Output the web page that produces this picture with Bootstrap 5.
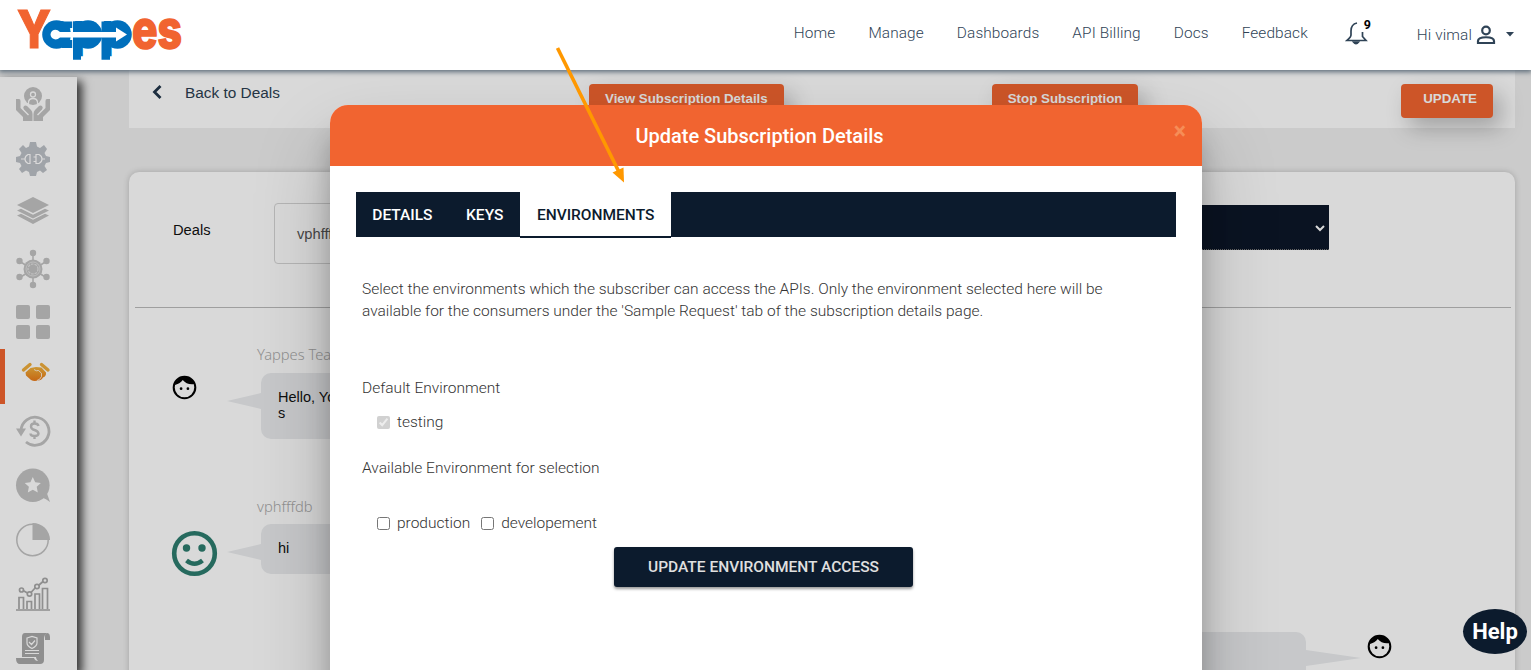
<!DOCTYPE html>
<html lang="en">
<head>
<meta charset="utf-8">
<title>Yappes - Update Subscription Details</title>
<link rel="stylesheet" href="https://cdn.jsdelivr.net/npm/bootstrap@5.3.0/dist/css/bootstrap.min.css">
<style>
:root{--navy:#0c1b2d;--orange:#f16430}
body{height:670px;overflow:hidden;background:#efefef;font-family:Roboto,"Liberation Sans",sans-serif;font-weight:300;color:#3c4858}
.topbar{height:70px;z-index:1080;background:#fff;box-shadow:0 1px 5px 1px #5b6b78;padding:0 17px 0 16px}
.topbar .nav-link{font-size:15.4px;color:#2f4356;padding:0;line-height:20px;letter-spacing:.11px;font-weight:300}
.topnav{gap:33px;margin-top:-4px}
.app-shell{height:600px;overflow:hidden}
.side{width:77px;margin-top:7px;background:#fff;box-shadow:4px 5px 9px 1px rgba(0,0,0,.75);flex:none;color:#bdbdbd}
.side a{height:54.5px;flex:none;color:#c2c2c2;padding-left:16px}
.side a.active{border-left:5px solid var(--orange);padding-left:11px}
.side svg{overflow:visible}
.workspace{padding:0 16px 0 52px}
.toolbar{height:58px;background:#fff;font-family:"Liberation Sans",sans-serif;padding-top:14px}
.act-btn{background:var(--orange);color:#fff;font:bold 13.33px/20px "Liberation Sans",sans-serif;height:34px;border-radius:4px;box-shadow:8px 10px 22px rgba(0,0,0,.25);padding:0 16px 5px;border:0}
.back{font-size:15.4px;line-height:20px;color:#2c3e50;width:460px;padding-left:23px}
.deal-card{margin-top:44px;height:520px;border:0;border-radius:10px;box-shadow:0 0 6px rgba(0,0,0,.2);font-family:"Liberation Sans",sans-serif;color:#111;font-weight:400}
.filters{height:136px;margin:0 4px 0 6px;border-bottom:1px solid #bbb;padding:31px 182px 0 38px;font-size:14.7px}
.deal-input{width:300px;height:61px;border:1px solid #d5d5d5;border-radius:4px;padding:19px 22px;color:#555}
.deal-select{width:300px;height:45px;margin-top:2px;background:#0c1729;color:#fff;border-bottom:1px dotted #777}
.who{font:300 14.7px/20px "Noto Sans",sans-serif;color:#aaa}
.bubble{position:relative;background:#eaecee;border-radius:10px;width:400px;padding:16px 17px;font-size:14.5px;line-height:16px}
.bubble:before{content:"";position:absolute;right:100%;top:20px;border:8px solid transparent;border-left:0;border-right:34px solid #eaecee}
.bubble.mine:before{right:auto;left:100%;top:18px;border-right:0;border-left:55px solid #eaecee}
.scrim{inset:0;background:rgba(0,0,0,.15);z-index:1040}
.dialog-box{left:330px;top:105px;width:872px;height:720px;background:#fff;border-radius:18px;z-index:1050;box-shadow:0 27px 24px 0 rgba(0,0,0,.2),0 40px 77px 0 rgba(0,0,0,.22)}
.dialog-head{height:61px;background:var(--orange);border-radius:18px 18px 0 0;color:#fff;font-size:20px;font-weight:500}
.close-x{right:16px;top:17px;font:bold 23px/20px Roboto,sans-serif;color:#f68d57}
.env-tabs{background:var(--navy);height:45px;margin:26px 26px 0 25.5px;font-size:15.5px;font-weight:500}
.env-tabs .nav-link{color:#fff;height:45px;line-height:47px;padding:0 16.8px}
.env-tabs .nav-link.active{background:#fff;color:var(--navy);height:46px;border-bottom:2px solid var(--navy)}
.dialog-body{padding:41px 32px 0;font-size:15.5px;line-height:22px;color:#333}
.env-check{line-height:22px;padding-left:15px}
.env-check input{width:13px;height:13px;margin:0 7px 0 0}
.access-btn{width:299px;height:40px;margin:13px auto 0 252px;background:var(--navy);color:#e0e0e0;border:0;border-radius:3px;font-size:15.5px;font-weight:500;box-shadow:0 2px 3px rgba(0,0,0,.4)}
.help{left:1463px;top:609px;width:64px;height:45px;border-radius:50%;background:var(--navy);color:#fff;font:bold 22px/45px Roboto,sans-serif;z-index:1090}
.pointer{left:540px;top:30px;z-index:1100}
</style>
</head>
<body class="position-relative">
<header class="topbar position-relative d-flex align-items-center">
  <svg width="170" height="68" class="me-auto overflow-visible" viewBox="16 1 170 68" style="font-family:Inter,sans-serif;font-weight:800" role="img" aria-label="Yappes">
    <g font-size="52.5">
      <text x="17" y="48.3" fill="#f16430" stroke="#f16430" stroke-width="1.2" textLength="34" lengthAdjust="spacingAndGlyphs">Y</text>
      <text x="132" y="48" fill="#f16430" stroke="#f16430" stroke-width="1.6" textLength="50" lengthAdjust="spacingAndGlyphs">es</text>
      <text x="46" y="47" font-size="47" fill="#006fbc" textLength="84" lengthAdjust="spacingAndGlyphs">app</text>
    </g>
    <g fill="#006fbc">
      <circle cx="56.500" cy="34.500" r="14.300"/>
      <path d="M62 21.500H81V28H62ZM62 40H81V48H62Z"/>
      <circle cx="88" cy="34.500" r="14.300"/>
      <circle cx="117.500" cy="34.500" r="14.300"/>
      <path d="M73 21.500H81V59.700H73ZM101.500 21.500H110V59.700H101.500Z"/>
    </g>
    <path d="M60 32H116V27.500L127 34.500 116 41.500V37.500H60Q56 41 52 38 49 34.500 52 31 56 28 60 32Z" fill="#fff"/>
    <path d="M72.500 20V49" stroke="#fff" stroke-width=".8"/>
  </svg>
  <nav class="topnav nav">
    <a class="nav-link">Home</a><a class="nav-link">Manage</a><a class="nav-link">Dashboards</a><a class="nav-link">API Billing</a><a class="nav-link">Docs</a><a class="nav-link">Feedback</a>
  </nav>
  <div class="position-relative" style="margin:-5px 0 0 37px;width:25px;height:26px">
    <svg class="d-block" width="23" height="25" viewBox="0 0 23 25" fill="none" stroke="#2f4356" stroke-width="1.7"><path d="M12 3C7 4 6 7 6 11V15Q6 17 2 20.500H21L17.500 16.500V12"/><path d="M8.500 22Q11 25.500 13.500 22Z" fill="#2f4356"/></svg>
    <span class="position-absolute text-black" style="left:19px;top:-3px;font-size:12.500px;font-weight:700;line-height:16px">9</span>
  </div>
  <a class="nav-link d-flex align-items-center" style="margin:-1px 0 0 47px">Hi vimal
    <svg width="20" height="20" style="margin-left:4px" viewBox="0 0 20 20" fill="none" stroke="#2f4356" stroke-width="2.200"><circle cx="10" cy="5.500" r="3.800"/><path d="M2 18V16C2 11 18 11 18 16V18Z"/></svg>
    <svg width="8" height="5" style="margin-left:10px" viewBox="0 0 8 5"><path d="M0 0H8L4 4.500Z" fill="#2f4356"/></svg>
  </a>
</header>

<div class="app-shell d-flex">
  <aside class="side d-flex flex-column">
    <a class="d-flex align-items-center"><svg width="34" height="34" viewBox="0 0 34 34" fill="currentColor"><circle cx="17" cy="9" r="9"/><g fill="none" stroke="#fff" stroke-width="1.300"><circle cx="17" cy="7.500" r="2.500"/><path d="M12.500 17V15Q13 11.500 17 11.500T21.500 15V17"/></g><path d="M0 12H3Q4.500 12 4.500 14V21L8 24.500 12 28.500 13 27.500 8 22.500Q6.500 20.500 8 19 9.500 18 11 19L15 23Q16.500 24.500 16.500 27V34H7V30L0 23ZM34 12H31Q29.500 12 29.500 14V21L26 24.500 22 28.500 21 27.500 26 22.500Q27.500 20.500 26 19 24.500 18 23 19L19 23Q17.500 24.500 17.500 27V34H27V30L34 23Z"/></svg></a>
    <a class="d-flex align-items-center"><svg width="34" height="34" viewBox="0 0 34 34" fill="#bdc1c7"><path d="M14 0H20L21 4.500 24 6 28 3 31 7 28.500 11 30 14 34 15V20L30 21 28.500 24 31 28 27 31 24 28.500 21 30 20 34H14L13 30 10 28.500 6 31 3 27 5.500 24 4 21 0 20V15L4 14 5.500 11 3 7 7 3 10 6 13 4.500Z"/><g fill="none" stroke="#fff" stroke-width="1.200"><path d="M5 17H9M14 12.500H12Q9 14 9 17T12 21.500H14ZM17.500 15H20M17.500 19.500H20M20 12.500H23Q26 14 26 17T23 21.500H20ZM26 17H29"/></g></svg></a>
    <a class="d-flex align-items-center"><svg width="34" height="34" viewBox="0 2.500 34 34" fill="currentColor"><path d="M17 3.500 33 11.500 17 19.500 1 11.500Z"/><path d="M1 17 5 15.200 17 21.200 29 15.200 33 17 17 25ZM1 22 5 20.200 17 26.200 29 20.200 33 22 17 30.500Z"/></svg></a>
    <a class="d-flex align-items-center"><svg width="34" height="38" viewBox="0 -2 34 38" fill="currentColor"><g stroke="currentColor" stroke-width="1.500"><path d="M17 2V36M3 10 31 27M31 10 3 27"/></g><circle cx="17" cy="2" r="3.200"/><circle cx="17" cy="34" r="3.200"/><circle cx="3.500" cy="10" r="3.200"/><circle cx="30.500" cy="10" r="3.200"/><circle cx="3.500" cy="26" r="3.200"/><circle cx="30.500" cy="26" r="3.200"/><circle cx="17" cy="18" r="9.500"/><circle cx="17" cy="18" r="5" fill="none" stroke="#e4e4e4" stroke-width="1.200" stroke-dasharray="2.500 1"/><circle cx="17" cy="18" r="7" fill="none" stroke="#e4e4e4" stroke-width=".8"/></svg></a>
    <a class="d-flex align-items-center"><svg width="34" height="34" viewBox="0 0 34 34" fill="currentColor"><rect width="14" height="14" rx="2"/><rect x="20" width="14" height="14" rx="2"/><rect y="20" width="14" height="14" rx="2"/><rect x="20" y="20" width="14" height="14" rx="2"/></svg></a>
    <a class="active d-flex align-items-center" style="margin-top:-1px;height:55.500px"><svg width="34" height="34" viewBox="0 0 34 34"><defs><linearGradient id="hs" x2="0" y2="1"><stop stop-color="#f0b23d"/><stop offset="1" stop-color="#e87a18"/></linearGradient></defs><path d="M7.500 11 14 5.500M32 11 25.500 5.500" stroke="#efad3d" stroke-width="3.400" stroke-linecap="round"/><path d="M9.500 13.500 14.500 9 20 8 25.500 8.500 30 13.500Q30.500 17 27 18.500 25.500 21.500 22 21.500 18 22.500 15 21L10 16.500Z" fill="url(#hs)"/><path d="M18 10.500Q20.500 12.500 22.500 11.500 27 14 25.500 17.500 24 21 21 21.500" fill="none" stroke="#fff" stroke-width=".8"/></svg></a>
    <a class="d-flex align-items-center"><svg width="34" height="34" viewBox="0 3.500 34 34" fill="none" stroke="currentColor"><path d="M5 20A14 14 0 1 1 10 31.500" stroke-width="2.800"/><path d="M0 18H10L5 26Z" fill="currentColor" stroke="none"/><path d="M22.500 15.500Q22 13 18.500 13T15 16Q15 18.500 18.500 19.500T22.500 23Q22.500 25.500 18.500 25.500T14.500 23M18.500 10V13M18.500 25.500V28.500" stroke-width="2.400"/></svg></a>
    <a class="d-flex align-items-center"><svg width="34" height="34" viewBox="0 .500 34 34" fill="currentColor"><circle cx="16.800" cy="16.800" r="16.800"/><path d="M26 29Q30 30 34 33.500L31 25Z"/><path fill="#fff" d="m16.800 8.500 2.400 5.200 5.700.7-4.200 3.900 1.100 5.700-5-2.800-5 2.800 1.100-5.700-4.200-3.900 5.700-.7Z"/></svg></a>
    <a class="d-flex align-items-center"><svg width="34" height="34" viewBox="0 0 34 34"><circle cx="16.500" cy="17" r="15.700" fill="none" stroke="currentColor" stroke-width="1.500"/><path d="M16.500 17V0A17 17 0 0 1 34 17Z" fill="currentColor"/></svg></a>
    <a class="d-flex align-items-center" style="color:#a8a8a8"><svg width="34" height="34" viewBox="0 1 34 34" fill="none" stroke="currentColor" stroke-width="1.700"><path d="M0 33H34M3 32V20.500H7.500V32M11 32V24.500H15.500V32M19 32V17H23.500V32M26.500 32V11.500H31.500V32M7 13.500 11.500 16M15 15.500 19.500 10.500M22.500 8.500 27 4.500"/><circle cx="5.500" cy="13" r="2"/><circle cx="13.500" cy="17" r="2.200"/><circle cx="21" cy="9.500" r="2.200"/><circle cx="29" cy="3.500" r="2.200"/></svg></a>
    <a class="d-flex align-items-center" style="color:#a8a8a8"><svg width="34" height="32" viewBox="0 0 34 32" fill="currentColor"><path d="M9 0H31Q28 2 28 6V27Q28 31 24 31H4Q0 31 0 25H18Q19 28 22 28 20 26 20 24H6V4Q6 0 9 0Z"/><path d="M29 7V3Q29 0 32 0 34 1 34 4V7Z"/><path d="M11 5 16 3.500 21 5V10Q21 13 16 15.500 11 13 11 10ZM13 9 15.500 11.500 19 7.500M9 17.500H23M9 20.500H23" fill="none" stroke="#fff" stroke-width="1.200"/></svg></a>
  </aside>

  <main class="workspace flex-grow-1">
    <div class="toolbar d-flex align-items-start">
      <a class="back d-flex align-items-center text-decoration-none"><svg width="10" height="14" viewBox="0 0 10 14" fill="none" stroke="#22364a" stroke-width="2.800" style="margin-top:-3px"><path d="M8.500 1 2.500 7 8.500 13"/></svg><span style="margin-left:23px;margin-top:-1px">Back to Deals</span></a>
      <button class="act-btn">View Subscription Details</button>
      <button class="act-btn" style="margin-left:208px">Stop Subscription</button>
      <button class="act-btn ms-auto" style="margin-right:22px;padding:0 16px 5px 22px">UPDATE</button>
    </div>
    <section class="deal-card card">
      <div class="filters d-flex align-items-start">
        <span style="width:101px;padding-top:16px">Deals</span>
        <div class="deal-input">vphfffdb</div>
        <div class="deal-select ms-auto d-flex align-items-center justify-content-end pe-1"><svg width="10" height="7" viewBox="0 0 10 7" fill="none" stroke="#fff" stroke-width="2" style="margin-top:2px"><path d="M1 1 5 5 9 1"/></svg></div>
      </div>
      <div class="d-flex" style="padding:36px 0 0 43px">
        <svg width="25" height="25" viewBox="1 1 22 22" class="flex-shrink-0" style="margin:31px 63px 0 0"><circle cx="12" cy="12" r="9.500" fill="none" stroke="#000" stroke-width="1.800"/><path d="M3 10Q8 9 10.500 5.500 14 10 21 9 18 2.500 12 2.500T3 10Z"/><circle cx="9" cy="13" r="1.200"/><circle cx="15" cy="13" r="1.200"/></svg>
        <div style="margin-left:-3px"><div class="who" style="margin-bottom:9px">Yappes Team</div><div class="bubble" style="height:66px;margin-left:4px;white-space:nowrap">Hello, You<br>s</div></div>
      </div>
      <div class="d-flex" style="padding:57px 0 0 42px">
        <svg width="47" height="47" viewBox="0 0 47 47" class="flex-shrink-0" style="margin:34px 39px 0 0" fill="none" stroke="#2d7d6f"><circle cx="23.500" cy="23.500" r="20.300" stroke-width="4.600"/><path d="M15.500 30.500Q23.500 37 31.500 30.500" stroke-width="4.500"/><g fill="#2d7d6f" stroke="none"><circle cx="15.500" cy="18" r="3.700"/><circle cx="31" cy="18" r="3.700"/></g></svg>
        <div><div class="who" style="margin-bottom:8px">vphfffdb</div><div class="bubble" style="height:50px;margin-left:4px">hi</div></div>
      </div>
      <div class="d-flex justify-content-end" style="padding:55px 123px 0 0">
        <div class="bubble mine" style="height:60px;margin-right:61px"></div>
        <svg width="25" height="25" viewBox="1 1 22 22" class="flex-shrink-0" style="margin-top:2px"><circle cx="12" cy="12" r="9.500" fill="none" stroke="#000" stroke-width="1.800"/><path d="M3 10Q8 9 10.500 5.500 14 10 21 9 18 2.500 12 2.500T3 10Z"/><circle cx="9" cy="13" r="1.200"/><circle cx="15" cy="13" r="1.200"/></svg>
      </div>
    </section>
  </main>
</div>

<div class="scrim position-absolute"></div>
<section class="dialog-box position-absolute" role="dialog">
  <div class="dialog-head position-relative d-flex align-items-center justify-content-center"><span style="margin-left:-13px">Update Subscription Details</span><span class="close-x position-absolute">×</span></div>
  <nav class="env-tabs nav"><a class="nav-link">DETAILS</a><a class="nav-link">KEYS</a><a class="nav-link active">ENVIRONMENTS</a></nav>
  <div class="dialog-body">
    <p class="m-0 text-nowrap">Select the environments which the subscriber can access the APIs. Only the environment selected here will be<br>available for the consumers under the 'Sample Request' tab of the subscription details page.</p>
    <div style="margin-top:55px">Default Environment</div>
    <label class="env-check d-flex align-items-center" style="margin-top:12px"><input type="checkbox" checked disabled>testing</label>
    <div style="margin-top:24px">Available Environment for selection</div>
    <div class="env-check d-flex" style="margin-top:33px"><label class="d-flex align-items-center"><input type="checkbox">production</label><label class="d-flex align-items-center" style="margin-left:11px"><input type="checkbox">developement</label></div>
    <button class="access-btn d-block">UPDATE ENVIRONMENT ACCESS</button>
  </div>
</section>
<div class="help position-absolute text-center">Help</div>
<svg class="pointer position-absolute" width="110" height="170" viewBox="540 30 110 170"><path d="M557.500 48 619 172" stroke="#ff9800" stroke-width="3.600"/><path d="M624 182.500 612.500 172.500 623.500 167.500Z" fill="#ff9800"/></svg>
<script src="https://cdn.jsdelivr.net/npm/bootstrap@5.3.0/dist/js/bootstrap.bundle.min.js"></script>
</body>
</html>
